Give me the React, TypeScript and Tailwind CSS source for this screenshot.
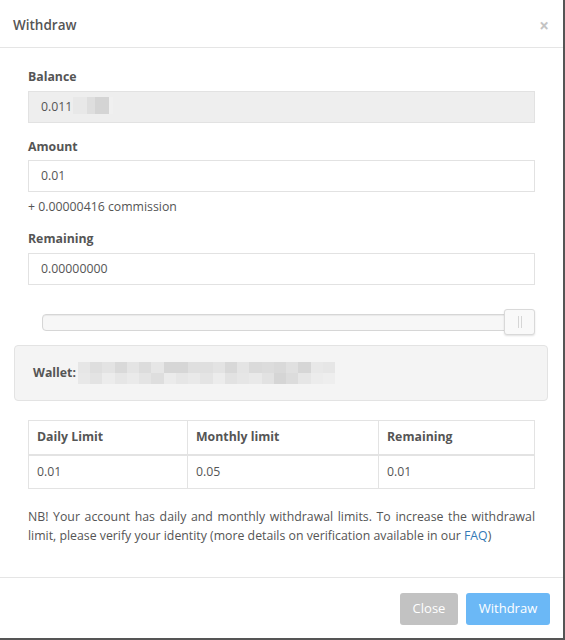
import React from "react";

const walletRow1 = [
  "bg-[#e6e6e6]","bg-[#dedede]","bg-[#e3e3e3]","bg-[#d9d9d9]","bg-[#e4e4e4]","bg-[#dcdcdc]","bg-[#e6e6e6]","bg-[#d6d6d6]","bg-[#d6d6d6]","bg-[#dfdfdf]","bg-[#dfdfdf]","bg-[#e3e3e3]","bg-[#d8d8d8]","bg-[#e4e4e4]","bg-[#dadada]","bg-[#dcdcdc]","bg-[#d9d9d9]","bg-[#e0e0e0]","bg-[#d6d6d6]","bg-[#e8e8e8]","bg-[#e6e6e6]",
];
const walletRow2 = [
  "bg-[#e8e8e8]","bg-[#e3e3e3]","bg-[#ececec]","bg-[#e6e6e6]","bg-[#eaeaea]","bg-[#e4e4e4]","bg-[#dedede]","bg-[#ebebeb]","bg-[#e6e6e6]","bg-[#e9e9e9]","bg-[#e4e4e4]","bg-[#ececec]","bg-[#e2e2e2]","bg-[#e6e6e6]","bg-[#e9e9e9]","bg-[#e2e2e2]","bg-[#d5d5d5]","bg-[#dcdcdc]","bg-[#e6e6e6]","bg-[#ececec]","bg-[#eeeeee]",
];

export default function App() {
  return (
    <div className="w-[565px] h-[640px] bg-white border-r-2 border-b-2 border-[#555] flex flex-col text-[12.3px] text-[#555] overflow-hidden" style={{ fontFamily: '"Open Sans", "Noto Sans", sans-serif' }}>
      {/* header */}
      <div className="h-[48px] shrink-0 flex items-center justify-between pl-[13px] pr-[14px] pt-[3px] border-b border-[#e5e5e5]">
        <div className="text-[13.5px] font-semibold text-[#555]">Withdraw</div>
        <div className="text-[17px] leading-none text-[#c4c4c4] font-bold">×</div>
      </div>

      {/* body */}
      <div className="flex-1 flex flex-col px-[14px]">
        <div className="px-[14px] pt-[20px]">
          <div className="font-bold leading-[18px] mb-[5px]">Balance</div>
          <div className="h-[32px] bg-[#eeeeee] border border-[#e2e2e2] flex items-center pl-[12px]">
            <span>0.011</span>
            <div className="flex ml-[1px] h-[17px] -mt-[3px]">
              <div className="w-[14px] bg-[#e8e8e8]" />
              <div className="w-[8px] bg-[#dedede]" />
              <div className="w-[14px] bg-[#d4d4d4]" />
              <div className="w-[4px] bg-[#f0f0f0]" />
            </div>
          </div>

          <div className="font-bold leading-[18px] mt-[15px] mb-[4px]">Amount</div>
          <div className="h-[32px] bg-white border border-[#e2e2e2] flex items-center pl-[12px]">0.01</div>
          <div className="leading-[18px] mt-[6px]">+ 0.00000416 commission</div>

          <div className="font-bold leading-[18px] mt-[14px] mb-[5px]">Remaining</div>
          <div className="h-[32px] bg-white border border-[#e2e2e2] flex items-center pl-[12px]">0.00000000</div>

          {/* slider */}
          <div className="mt-[24px] ml-[14px] relative h-[26px] flex items-center">
            <div className="w-full h-[17px] rounded-[4px] bg-[#f7f7f7] border border-[#d6d6d6] shadow-[inset_0_1px_1px_rgba(0,0,0,0.06)]" />
            <div className="absolute right-0 top-0 w-[31px] h-[26px] bg-[#f9f9f9] border border-[#d9d9d9] rounded-[3px] shadow-[0_1px_2px_rgba(0,0,0,0.12)] flex items-center justify-center gap-[2px]">
              <div className="w-px h-[12px] bg-[#d6d6d6]" />
              <div className="w-px h-[12px] bg-[#d6d6d6]" />
            </div>
          </div>
        </div>

        {/* wallet well */}
        <div className="mt-[10px] h-[56px] mr-[1px] bg-[#f4f4f4] border border-[#e3e3e3] rounded-[4px] flex items-center pl-[18px]">
          <span className="font-bold">Wallet:</span>
          <div className="ml-[2px] flex flex-col">
            <div className="flex h-[11px]">
              {walletRow1.map((c, i) => (
                <div key={i} className={`w-[12.25px] ${c}`} />
              ))}
            </div>
            <div className="flex h-[11px]">
              {walletRow2.map((c, i) => (
                <div key={i} className={`w-[12.25px] ${c}`} />
              ))}
            </div>
          </div>
        </div>

        {/* table */}
        <div className="px-[14px] mt-[19px]">
          <table className="w-full border-collapse border border-[#e3e3e3]">
            <thead>
              <tr className="h-[34px]">
                <th className="w-[159px] text-left font-bold px-[8px] border border-[#e3e3e3] border-b-2">Daily Limit</th>
                <th className="w-[191px] text-left font-bold px-[8px] border border-[#e3e3e3] border-b-2">Monthly limit</th>
                <th className="text-left font-bold px-[8px] border border-[#e3e3e3] border-b-2">Remaining</th>
              </tr>
            </thead>
            <tbody>
              <tr className="h-[34px]">
                <td className="px-[8px] border border-[#e3e3e3]">0.01</td>
                <td className="px-[8px] border border-[#e3e3e3]">0.05</td>
                <td className="px-[8px] border border-[#e3e3e3]">0.01</td>
              </tr>
            </tbody>
          </table>

          <p className="mt-[18px] leading-[19px] text-justify">
            NB! Your account has daily and monthly withdrawal limits. To increase the withdrawal limit, please verify your identity (more details on verification available in our <span className="text-[#337ab7]">FAQ</span>)
          </p>
        </div>
      </div>

      {/* footer */}
      <div className="h-[61px] shrink-0 border-t border-[#e5e5e5] flex items-start justify-end gap-[8px] pr-[13px] pt-[15px]">
        <div className="h-[32px] w-[58px] rounded-[3px] bg-[#c2c2c2] text-white text-[13px] flex items-center justify-center">Close</div>
        <div className="h-[32px] w-[84px] rounded-[3px] bg-[#6bb8f6] text-white text-[13px] flex items-center justify-center">Withdraw</div>
      </div>
    </div>
  );
}
